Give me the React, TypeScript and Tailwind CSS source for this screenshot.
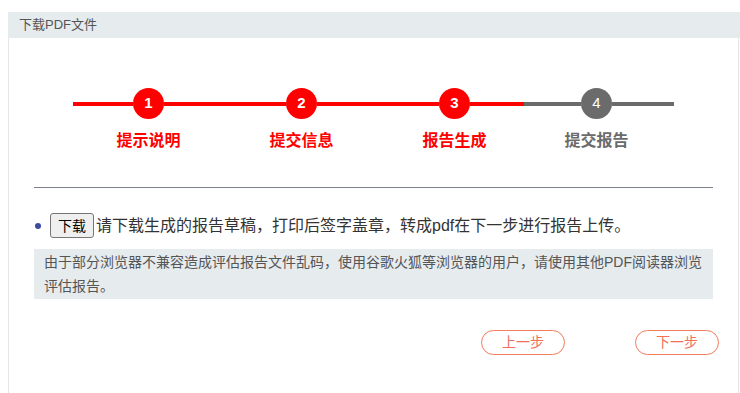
import React from "react";

const font = { fontFamily: '"Liberation Sans", "Noto Sans CJK SC", sans-serif' };

function Step({ n, label, active }: { n: number; label: string; active: boolean }) {
  return (
    <div className="flex w-[31px] shrink-0 flex-col items-center">
      <div
        className={`flex h-[31px] w-[31px] items-center justify-center rounded-full text-[15px] text-white ${
          active ? "bg-[#ff0000] font-bold" : "bg-[#6b6b6b]"
        }`}
      >
        {n}
      </div>
      <div
        className={`mt-[12px] whitespace-nowrap text-[16px] font-bold leading-[20px] ${
          active ? "text-[#ff0000]" : "text-[#6b6b6b]"
        }`}
      >
        {label}
      </div>
    </div>
  );
}

export default function App() {
  return (
    <div className="min-h-[393px] bg-white pt-[12px]" style={font}>
      <div className="ml-[8px] h-[26px] w-[732px] bg-[#e6ebee] pl-[11px] text-[13px] leading-[26px] text-[#555]">
        下载PDF文件
      </div>
      <div className="ml-[8px] h-[360px] w-[731px] border-x border-[#e6e6e6]">
        <div className="flex pl-[64px] pt-[50px]">
          <div className="mt-[14px] h-[4px] w-[60px] bg-[#ff0000]" />
          <Step n={1} label="提示说明" active />
          <div className="mt-[14px] h-[4px] w-[122px] bg-[#ff0000]" />
          <Step n={2} label="提交信息" active />
          <div className="mt-[14px] h-[4px] w-[122px] bg-[#ff0000]" />
          <Step n={3} label="报告生成" active />
          <div className="mt-[14px] h-[4px] w-[54px] bg-[#ff0000]" />
          <div className="mt-[14px] h-[4px] w-[57px] bg-[#6b6b6b]" />
          <Step n={4} label="提交报告" active={false} />
          <div className="mt-[14px] h-[4px] w-[62px] bg-[#6b6b6b]" />
        </div>

        <div className="ml-[25px] mt-[36px] h-px w-[679px] bg-[#7d828a]" />

        <div className="ml-[25px] mt-[25px] flex items-center">
          <span className="ml-[1px] mr-[9px] h-[6px] w-[6px] rounded-full bg-[#3c4aa0]" />
          <button className="h-[25px] rounded-[3px] border border-[#767676] bg-[#efefef] px-[7px] text-[14px] leading-[20px] text-black">
            下载
          </button>
          <span className="ml-[2px] text-[16px] leading-[25px] text-[#333]">
            请下载生成的报告草稿，打印后签字盖章，转成pdf在下一步进行报告上传。
          </span>
        </div>

        <div className="ml-[25px] mt-[11px] w-[679px] bg-[#e6ebee] py-px pl-[10px] pr-[4px] text-[14px] leading-[24px] text-[#555]">
          由于部分浏览器不兼容造成评估报告文件乱码，使用谷歌火狐等浏览器的用户，请使用其他PDF阅读器浏览评估报告。
        </div>

        <div className="mt-[31px] flex justify-end pr-[19px]">
          <button className="h-[25px] w-[84px] rounded-full border border-[#f27c5c] bg-white text-[14px] text-[#f0705a]">
            上一步
          </button>
          <button className="ml-[70px] h-[25px] w-[84px] rounded-full border border-[#f27c5c] bg-white text-[14px] text-[#f0705a]">
            下一步
          </button>
        </div>
      </div>
    </div>
  );
}
